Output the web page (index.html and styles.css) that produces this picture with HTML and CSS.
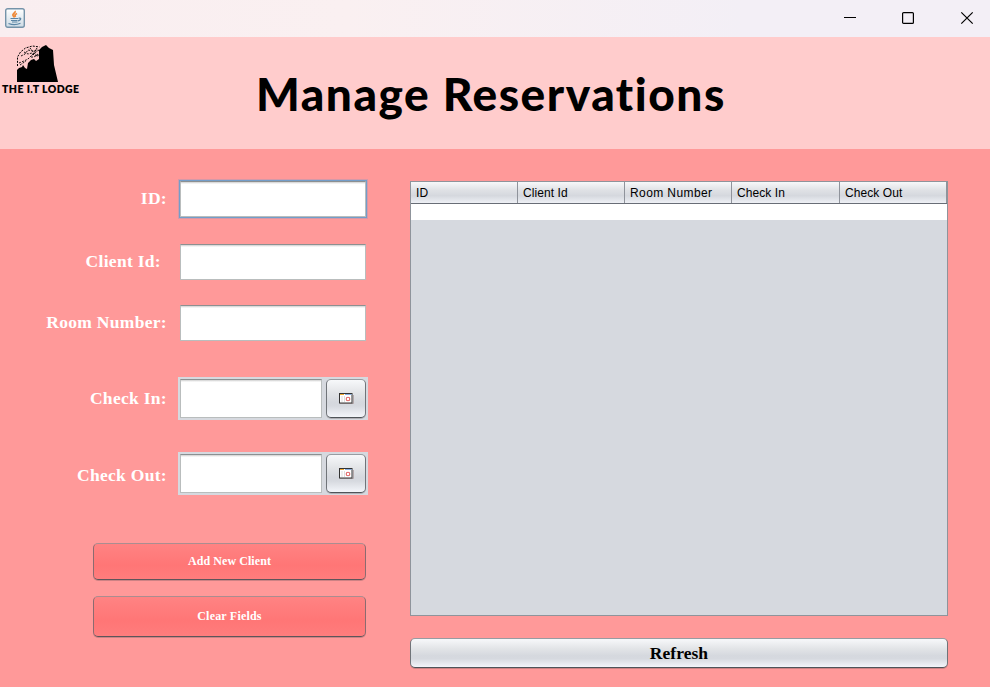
FILE: index.html
```
<!DOCTYPE html>
<html lang="en">
<head>
<meta charset="utf-8">
<title>Manage Reservations</title>
<link rel="stylesheet" href="styles.css">
</head>
<body>
<div class="titlebar">
  <svg class="java" width="20" height="20" viewBox="0 0 20 20">
    <defs><linearGradient id="jg" x2="0" y2="1"><stop stop-color="#fff"/><stop offset="1" stop-color="#cddbe5"/></linearGradient></defs>
    <rect x=".7" y=".7" width="18.6" height="18.6" rx="2" fill="url(#jg)" stroke="#7593a9" stroke-width="1.4"/>
    <path d="M10 3c1 2-3 2.500-2 4.500.3.800 1.200 1 1.500 2M12 5.500c-2 1-2.500 1.800-1.500 3.500" fill="none" stroke="#ee8a3a" stroke-width="1.800"/>
    <path d="M5.500 10.500h7.500M6 12.500h6.500M7 14h5.500M3.500 15.500q6 2.500 12-.2M13.500 10.300q3-.5 2 1.200-1 1-2.500 1.300" fill="none" stroke="#5b85a5" stroke-width="1.200"/>
  </svg>
  <div class="controls">
    <svg width="14" height="14" viewBox="0 0 14 14"><path d="M1 6.500h12" stroke="#000"/></svg>
    <svg width="14" height="14" viewBox="0 0 14 14"><rect x="1.600" y="1.600" width="10.800" height="10.800" rx="1" fill="none" stroke="#000" stroke-width="1.200"/></svg>
    <svg width="14" height="14" viewBox="0 0 14 14"><path d="M1.300 1.300l11.400 11.400M12.700 1.300L1.300 12.700" stroke="#000" stroke-width="1.200"/></svg>
  </div>
</div>
<header class="header">
  <div class="brand">
    <svg width="42" height="38" viewBox="0 0 42 38">
      <path d="M0 37V25l2-2 3-1 1-2 2 3 2 1 1-6 3-3 3-1 2 2 3-2V5l3-3 4-2 3 3 4 2 1 15 4 17z"/>
      <path d="M0.500 21V12l3-5 5-4 7-2 7 1" fill="none" stroke="#000" stroke-dasharray="2 1.200"/>
      <path d="M2 18l5-2 4-2 5-5 6-4M4 11l4-2 3-4 5 1 5-1M7 7l4 2 4-1 3 3 4-1M14 12h3l4-3M3 20l6-4M13 3l4 5 5 4M20 3l-5 8" fill="none" stroke="#000" stroke-width=".9" stroke-dasharray="2 1.200"/>
    </svg>
    <span>THE I.T LODGE</span>
  </div>
  <h1>Manage Reservations</h1>
</header>
<main class="content">
  <form class="form">
    <div class="row"><label>ID:</label><div class="field focused"></div></div>
    <div class="row client"><label>Client Id:</label><div class="field"></div></div>
    <div class="row room"><label>Room Number:</label><div class="field"></div></div>
    <div class="row date">
      <label>Check In:</label>
      <div class="picker"><div class="field"></div><button type="button" class="btn pick" aria-label="Choose date"><svg width="15" height="11" viewBox="0 0 15 11"><path d="M1 10.500h13.500V2" fill="none" stroke="#b4a9ab"/><rect x=".5" y=".5" width="12.500" height="9.500" fill="#fff" stroke="#333"/><path d="M1 1.500h4" stroke="#f0a830"/><path d="M6 1.500h6.500" stroke="#89aee0"/><path d="M3 3v6M5.500 3v6" stroke="#ddd"/><circle cx="9" cy="6" r="1.800" fill="#fff" stroke="#e06464" stroke-width="1.100"/></svg></button></div>
    </div>
    <div class="row date out">
      <label>Check Out:</label>
      <div class="picker"><div class="field"></div><button type="button" class="btn pick" aria-label="Choose date"><svg width="15" height="11" viewBox="0 0 15 11"><path d="M1 10.500h13.500V2" fill="none" stroke="#b4a9ab"/><rect x=".5" y=".5" width="12.500" height="9.500" fill="#fff" stroke="#333"/><path d="M1 1.500h4" stroke="#f0a830"/><path d="M6 1.500h6.500" stroke="#89aee0"/><path d="M3 3v6M5.500 3v6" stroke="#ddd"/><circle cx="9" cy="6" r="1.800" fill="#fff" stroke="#e06464" stroke-width="1.100"/></svg></button></div>
    </div>
    <button type="button" class="btn red add">Add New Client</button>
    <button type="button" class="btn red clear">Clear Fields</button>
  </form>
  <section class="panel">
    <div class="table">
      <div class="thead"><span>ID</span><span>Client Id</span><span class="wide">Room Number</span><span>Check In</span><span>Check Out</span></div>
      <div class="trow"></div>
    </div>
    <button type="button" class="btn refresh">Refresh</button>
  </section>
</main>
</body>
</html>
```
FILE: styles.css
```
* { box-sizing: border-box; }
body { margin: 0; width: 990px; height: 687px; overflow: hidden; background: #ff9999; display: flex; flex-direction: column; }
svg { display: block; }
.titlebar { height: 37px; padding: 8px 16px 0 5px; display: flex; justify-content: space-between; background: linear-gradient(90deg, #f9eef0, #faf0f1 35%, #f3eff6 75%); }
.controls { display: flex; gap: 44px; padding-top: 3px; }
.controls svg { margin-right: .5px; }
.header { height: 112px; background: #ffcccc; display: flex; }
.brand { width: 256px; padding: 8px 0 0 2px; font: 800 10.5px/13px Lato, sans-serif; letter-spacing: .42px; color: #000; }
.brand svg { margin: 0 0 0 15px; }
.brand span { display: block; white-space: nowrap; }
h1 { margin: 27px 0 0; font: 900 46px/60px Lato, sans-serif; letter-spacing: 1.53px; white-space: nowrap; color: #000; }
.content { flex: 1; display: flex; }
.form { width: 410px; padding-top: 32px; display: flex; flex-direction: column; }
.row { height: 36px; display: flex; align-items: center; }
.row label { width: 167px; margin-right: 13px; padding-bottom: 3px; text-align: right; font: bold 17.5px/20px "Liberation Serif", serif; letter-spacing: .3px; color: #fff; white-space: nowrap; }
.field { width: 186px; height: 36px; background: linear-gradient(#d0d0d0, #e6e6e6 1px, #fff 2px) #fff; border: 1px solid #b9bdbd; border-top-color: #8c9091; }
.focused { box-shadow: 0 0 0 1px #739dc9, 0 0 0 2px rgba(115, 157, 201, .3); }
.client { margin-top: 27px; }
.client label { width: 161px; margin-right: 19px; }
.room { margin-top: 25px; }
.date { height: 43px; margin-top: 36px; }
.date label { margin-right: 11px; padding: 0 0 1px; }
.picker { width: 190px; height: 43px; padding: 2px; background: #d6d9df; display: flex; justify-content: space-between; }
.picker .field { width: 142px; height: 39px; }
.out { margin-top: 32px; }
.out label { padding: 2px 0 0; }
.btn { padding: 0; border: 1px solid; border-color: #989ca1 #707479 #4f5459; border-radius: 5px; background: linear-gradient(#f7f8fa, #e2e4e7 35%, #d5d8de 60%, #d6d9df 70%, #f3f5fa); box-shadow: 0 1px 0 rgba(90, 80, 85, .3); }
.pick { width: 40px; height: 39px; display: flex; justify-content: center; align-items: center; }
.red { width: 273px; margin-left: 93px; color: #fff; font: bold 12px/14px "Liberation Serif", serif; background: linear-gradient(#ff8383, #ff7676 60%, #ff7878 75%, #ff7d7d); border-color: #aa8d90 #8b6b70 #5d555a; letter-spacing: .07px; }
.add { height: 37px; margin-top: 48px; padding-bottom: 2px; }
.clear { height: 41px; margin-top: 16px; padding-bottom: 2px; letter-spacing: .2px; }
.panel { width: 538px; padding-top: 32px; }
.table { height: 435px; border: 1px solid #8f949b; background: #d6d9df; }
.thead { height: 22px; display: grid; grid-template-columns: 107px 107px 107px 108px 107px; border-bottom: 1px solid #686d76; background: linear-gradient(#f7f8fa, #dfe1e5 40%, #d5d8de 65%, #eef0f5); }
.thead span { height: 21px; padding-left: 5px; border-right: 1px solid #8f939b; font: 12px/23px "Liberation Sans", sans-serif; color: #000; white-space: nowrap; letter-spacing: .07px; }
.thead .wide { letter-spacing: .4px; }
.trow { height: 16px; background: #fff; }
.refresh { display: block; width: 538px; height: 30px; margin-top: 22px; padding-bottom: 1px; font: bold 17.5px/20px "Liberation Serif", serif; color: #000; letter-spacing: .05px; }
```
